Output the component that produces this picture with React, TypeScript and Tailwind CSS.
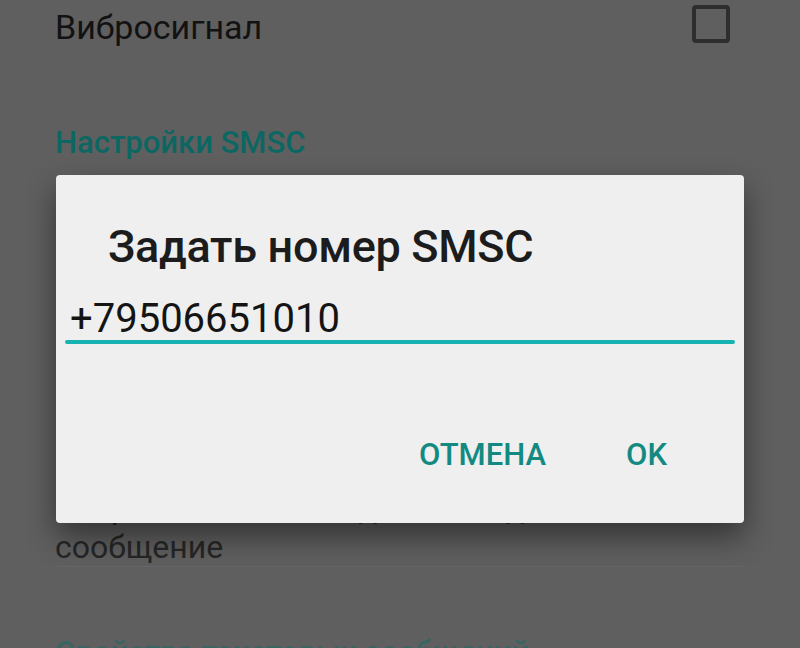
export default function App() {
  return (
    <div className="relative h-[648px] w-[800px] overflow-hidden bg-[#5f5f5f] font-['Roboto',sans-serif]">
      {/* Settings list (dimmed) */}
      <div className="flex flex-col px-[55px]">
        <div className="flex items-start justify-between">
          <span className="mt-[10px] text-[34px] leading-none text-[#121212]">Вибросигнал</span>
          <span className="mt-[5px] mr-[15px] h-[38px] w-[38px] rounded-[4px] border-[4px] border-[#2e2e2e]" />
        </div>
        <div className="mt-[83px] text-[31px] font-medium leading-none text-[#0c6763]">Настройки SMSC</div>
        <p className="mt-[331px] text-[32px] leading-[38px] text-[#262626]">
          Отправлять отчёт о доставке для всех
        </p>
        <p className="mt-px text-[32px] leading-[38px] text-[#262626]">сообщение</p>
        <div className="h-px bg-[#676767]" />
        <div className="mt-[70px] text-[31px] font-medium leading-none text-[#3a6462]">Свойства текстовых сообщений</div>
      </div>

      {/* Dialog */}
      <div className="absolute left-[56px] top-[175px] flex h-[348px] w-[688px] flex-col rounded-[4px] bg-[#efefef] shadow-[0_14px_30px_rgba(0,0,0,0.45)]">
        <h2 className="mt-[49px] pl-[52px] text-[45px] font-medium leading-none tracking-[-0.3px] text-[#1c1c1c]">Задать номер SMSC</h2>
        <div className="mt-[30px] pl-[14px] text-[40px] leading-none text-[#141414]">+79506651010</div>
        <div className="mx-[9px] mt-px h-[4px] rounded-full bg-[#17b3b3]" />
        <div className="mt-[95px] flex justify-end gap-[80px] pr-[77px]">
          <span className="text-[31px] font-medium leading-none text-[#128a82]">ОТМЕНА</span>
          <span className="text-[31px] font-medium leading-none text-[#128a82]">OK</span>
        </div>
      </div>
    </div>
  )
}
